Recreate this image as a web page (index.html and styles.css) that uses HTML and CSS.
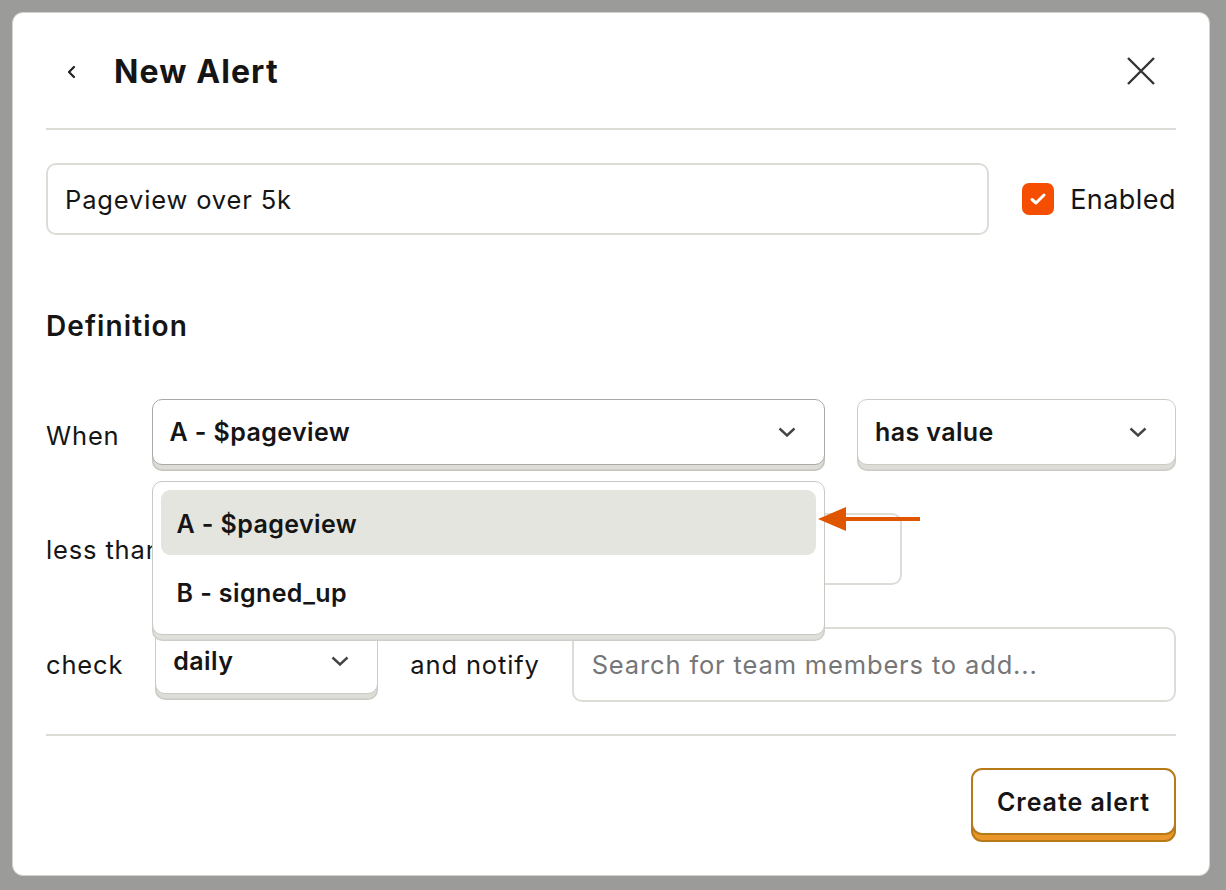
FILE: index.html
```html
<!DOCTYPE html>
<html>
<head>
<meta charset="utf-8">
<link rel="stylesheet" href="styles.css">
</head>
<body>
<div class="modal">
  <div class="header">
    <div class="header-left">
      <svg class="back" width="12" height="18" viewBox="0 0 12 18"><path d="M8 4 L3 9 L8 14" fill="none" stroke="#222" stroke-width="2.2" stroke-linecap="round" stroke-linejoin="round"/></svg>
      <h1 class="title">New Alert</h1>
    </div>
    <svg class="close" width="30" height="30" viewBox="0 0 30 30"><path d="M2 2 L28 28 M28 2 L2 28" fill="none" stroke="#333" stroke-width="2.4"/></svg>
  </div>

  <div class="name-row">
    <div class="text-input name-input">Pageview over 5k</div>
    <label class="check">
      <span class="checkbox"><svg width="18" height="14" viewBox="0 0 18 14"><path d="M3 7.5 L7 11 L15 3" fill="none" stroke="#fff" stroke-width="3" stroke-linecap="round" stroke-linejoin="round"/></svg></span>
      <span class="check-label">Enabled</span>
    </label>
  </div>

  <h2 class="section">Definition</h2>

  <div class="row row-when">
    <span class="label">When</span>
    <div class="select-wrap grow">
      <div class="select open"><span>A - $pageview</span>
        <svg class="chev" width="18" height="10" viewBox="0 0 18 10"><path d="M1.5 1.5 L9 8.5 L16.5 1.5" fill="none" stroke="#444" stroke-width="2.4"/></svg>
      </div>
      <div class="menu">
        <div class="menu-item active">A - $pageview</div>
        <div class="menu-item">B - signed_up</div>
      </div>
      <div class="pointer"><span class="head"></span><span class="shaft"></span></div>
    </div>
    <div class="select sel-has"><span>has value</span>
      <svg class="chev" width="18" height="10" viewBox="0 0 18 10"><path d="M1.5 1.5 L9 8.5 L16.5 1.5" fill="none" stroke="#444" stroke-width="2.4"/></svg>
    </div>
  </div>

  <div class="row row-less">
    <span class="label">less than</span>
    <div class="text-input less-input"></div>
  </div>

  <div class="row row-check">
    <span class="label">check</span>
    <div class="select sel-daily"><span>daily</span>
      <svg class="chev" width="18" height="10" viewBox="0 0 18 10"><path d="M1.5 1.5 L9 8.5 L16.5 1.5" fill="none" stroke="#444" stroke-width="2.4"/></svg>
    </div>
    <span class="label">and notify</span>
    <div class="text-input search-input"><span class="placeholder">Search for team members to add...</span></div>
  </div>

  <div class="footer">
    <button class="primary">Create alert</button>
  </div>
</div>
</body>
</html>
```
FILE: styles.css
```css
* { box-sizing: border-box; }
html, body { margin: 0; padding: 0; }
body {
  width: 1226px;
  height: 890px;
  background: #9b9b99;
  font-family: Inter, "Noto Sans", sans-serif;
  color: #151515;
  padding: 12px 16px 14px 12px;
}
.modal {
  width: 1198px;
  height: 864px;
  background: #fff;
  border-radius: 11px;
  border: 1px solid #d4d4cf;
  padding: 0 33px;
}
.header {
  height: 117px;
  display: flex;
  align-items: center;
  justify-content: space-between;
  border-bottom: 2px solid #dcdcd7;
}
.header-left {
  display: flex;
  align-items: center;
  padding-left: 20px;
  gap: 36px;
  margin-top: 2px;
}
.title {
  margin: 0;
  font-size: 32px;
  font-weight: 700;
  letter-spacing: 1.1px;
}
.close { margin-right: 20px; }
.name-row {
  margin-top: 33px;
  display: flex;
  align-items: center;
  gap: 16px;
}
.text-input {
  height: 72px;
  border: 2px solid #ddddd8;
  border-radius: 10px;
  display: flex;
  align-items: center;
  padding: 0 17px;
  font-size: 25.5px;
  letter-spacing: 0.85px;
}
.name-input { flex: 1; margin-right: 17px; }
.check {
  display: flex;
  align-items: center;
  gap: 16px;
}
.checkbox {
  width: 32px;
  height: 32px;
  border-radius: 7px;
  background: #f54e00;
  display: flex;
  align-items: center;
  justify-content: center;
}
.check-label { font-size: 27px; letter-spacing: 0.45px; }
.section {
  margin: 74px 0 0 0;
  font-size: 28px;
  font-weight: 600;
  line-height: 34px;
  letter-spacing: 1.1px;
}
.row {
  display: flex;
  align-items: center;
  gap: 33px;
}
.row-when { gap: 32px; margin-top: 56px; }
.row-less { margin-top: 42px; }
.row-check { gap: 32px; margin-top: 41px; }
.label { font-size: 25.5px; white-space: nowrap; letter-spacing: 0.85px; }
.grow { flex: 1; }
.select-wrap { position: relative; }
.select {
  height: 66px;
  border: 1.5px solid #cbcbc6;
  border-radius: 10px;
  background: #fff;
  display: flex;
  align-items: center;
  justify-content: space-between;
  padding: 0 28px 0 17px;
  font-size: 25px;
  font-weight: 600;
  letter-spacing: 0.4px;
  box-shadow: 0 6px 0 -1.5px #dddcd7, 0 6px 0 0 #cbcbc6;
  margin-bottom: 6px;
}
.select.open { border-color: #a9a9a5; box-shadow: 0 6px 0 -1.5px #dddcd7, 0 6px 0 0 #c4c4bf; }
.sel-has { width: 319px; }
.sel-daily { width: 223px; }
.search-input { flex: 1; height: 75px; padding-left: 18px; margin-top: 1px; }
.placeholder { color: #767676; }
.less-input { width: 707px; height: 72px; }
.menu {
  position: absolute;
  left: 0;
  right: 0;
  top: 82px;
  z-index: 5;
  background: #fff;
  border: 1.5px solid #c9c9c4;
  border-radius: 10px;
  padding: 8px;
  box-shadow: 0 6px 0 -1.5px #e0e0db, 0 6px 0 0 #cfcfca;
}
.menu-item {
  height: 65px;
  border-radius: 9px;
  display: flex;
  align-items: center;
  padding-left: 16px;
  padding-top: 2px;
  font-size: 25px;
  font-weight: 600;
  letter-spacing: 0.4px;
}
.menu-item + .menu-item { height: 68px; margin-top: 3px; }
.menu-item.active { background: #e5e5e0; }
.pointer {
  position: absolute;
  left: calc(100% - 7px);
  top: 108px;
  z-index: 6;
  display: flex;
  align-items: center;
}
.head {
  width: 0; height: 0;
  border-top: 12px solid transparent;
  border-bottom: 12px solid transparent;
  border-right: 28px solid #e05500;
}
.shaft {
  width: 76px;
  height: 4px;
  background: #e05500;
  margin-left: -2px;
}
.footer {
  margin-top: 32px;
  border-top: 2px solid #dcdcd7;
  padding-top: 32px;
  display: flex;
  justify-content: flex-end;
}
.primary {
  width: 205px;
  height: 67px;
  border: 2px solid #b77a18;
  border-radius: 11px;
  background: #fff;
  font-family: inherit;
  font-size: 25px;
  font-weight: 600;
  letter-spacing: 0.95px;
  color: #151515;
  box-shadow: 0 7px 0 -2px #e9962b, 0 7px 0 0 #b77a18;
}
```
